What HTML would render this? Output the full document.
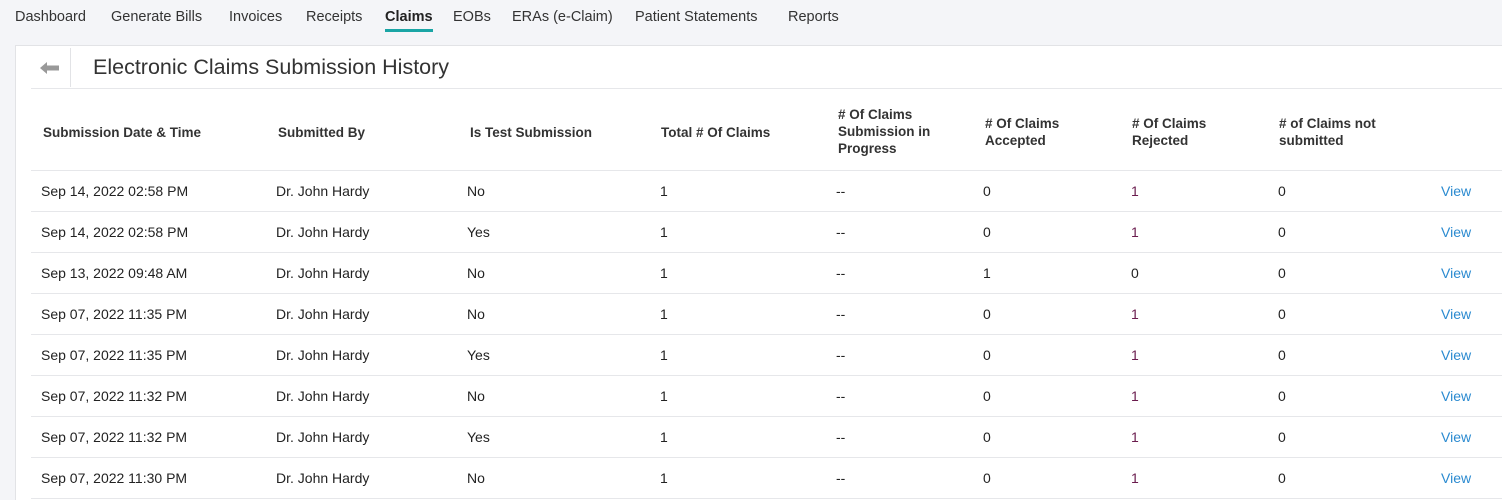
<!DOCTYPE html><html><head><style>
html,body{margin:0;width:1502px;height:500px;overflow:hidden}
body{background:#f4f5f8;font-family:"Liberation Sans",sans-serif;color:#222;position:relative}
.nav{position:absolute;top:9px;left:15px;font-size:14.5px;color:#333}
.nav span{position:absolute;white-space:nowrap}
.card{position:absolute;left:15px;top:45px;width:1500px;height:460px;background:#fff;border:1px solid #e2e3e6}
.t{position:absolute;font-size:14px;white-space:nowrap}
.h{font-weight:bold;font-size:13.5px;line-height:17px;color:#333;position:absolute;white-space:nowrap}
.line{position:absolute;left:31px;width:1480px;height:1px;background:#e6e7ea}
.v{color:#2a8ad0}.r{color:#6a1b4d}
</style></head><body>
<div class="nav">
<span style="left:0">Dashboard</span><span style="left:96px">Generate Bills</span><span style="left:214px">Invoices</span><span style="left:291px">Receipts</span><span style="left:370px;font-weight:bold;color:#222">Claims</span><span style="left:438px">EOBs</span><span style="left:497px">ERAs (e-Claim)</span><span style="left:620px">Patient Statements</span><span style="left:773px">Reports</span>
</div>
<div style="position:absolute;left:385px;top:29px;width:48px;height:3px;background:#1aa5a5"></div>
<div class="card"></div>
<svg style="position:absolute;left:40px;top:61px" width="20" height="14"><path d="M0 7 L7 1 V4.5 H19 V9.5 H7 V13 Z" fill="#999"/></svg>
<div style="position:absolute;left:70px;top:48px;width:1px;height:39px;background:#e2e3e6"></div>
<div style="position:absolute;left:93px;top:55px;font-size:21.5px;color:#333">Electronic Claims Submission History</div>
<div class="line" style="top:88px"></div>
<div class="h" style="left:43px;top:124px">Submission Date &amp; Time</div>
<div class="h" style="left:278px;top:124px">Submitted By</div>
<div class="h" style="left:470px;top:124px">Is Test Submission</div>
<div class="h" style="left:661px;top:124px">Total # Of Claims</div>
<div class="h" style="left:838px;top:106px"># Of Claims<br>Submission in<br>Progress</div>
<div class="h" style="left:985px;top:115px"># Of Claims<br>Accepted</div>
<div class="h" style="left:1132px;top:115px"># Of Claims<br>Rejected</div>
<div class="h" style="left:1279px;top:115px"># of Claims not<br>submitted</div>
<div id="rows"></div>
<script>
var d=[["Sep 14, 2022 02:58 PM","No","0","1"],["Sep 14, 2022 02:58 PM","Yes","0","1"],["Sep 13, 2022 09:48 AM","No","1","0"],["Sep 07, 2022 11:35 PM","No","0","1"],["Sep 07, 2022 11:35 PM","Yes","0","1"],["Sep 07, 2022 11:32 PM","No","0","1"],["Sep 07, 2022 11:32 PM","Yes","0","1"],["Sep 07, 2022 11:30 PM","No","0","1"]];
var h="";d.forEach(function(r,i){var y=170+41*i,ty=y+13;
h+='<div class="line" style="top:'+y+'px"></div>';
h+='<div class="t" style="left:41px;top:'+ty+'px">'+r[0]+'</div><div class="t" style="left:276px;top:'+ty+'px">Dr. John Hardy</div><div class="t" style="left:467px;top:'+ty+'px">'+r[1]+'</div><div class="t" style="left:660px;top:'+ty+'px">1</div><div class="t" style="left:836px;top:'+ty+'px">--</div><div class="t" style="left:983px;top:'+ty+'px">'+r[2]+'</div><div class="t'+(r[3]=="1"?" r":"")+'" style="left:1131px;top:'+ty+'px">'+r[3]+'</div><div class="t" style="left:1278px;top:'+ty+'px">0</div><div class="t v" style="left:1441px;top:'+ty+'px">View</div>';});
h+='<div class="line" style="top:498px"></div>';
document.getElementById("rows").innerHTML=h;
</script>
</body></html>
